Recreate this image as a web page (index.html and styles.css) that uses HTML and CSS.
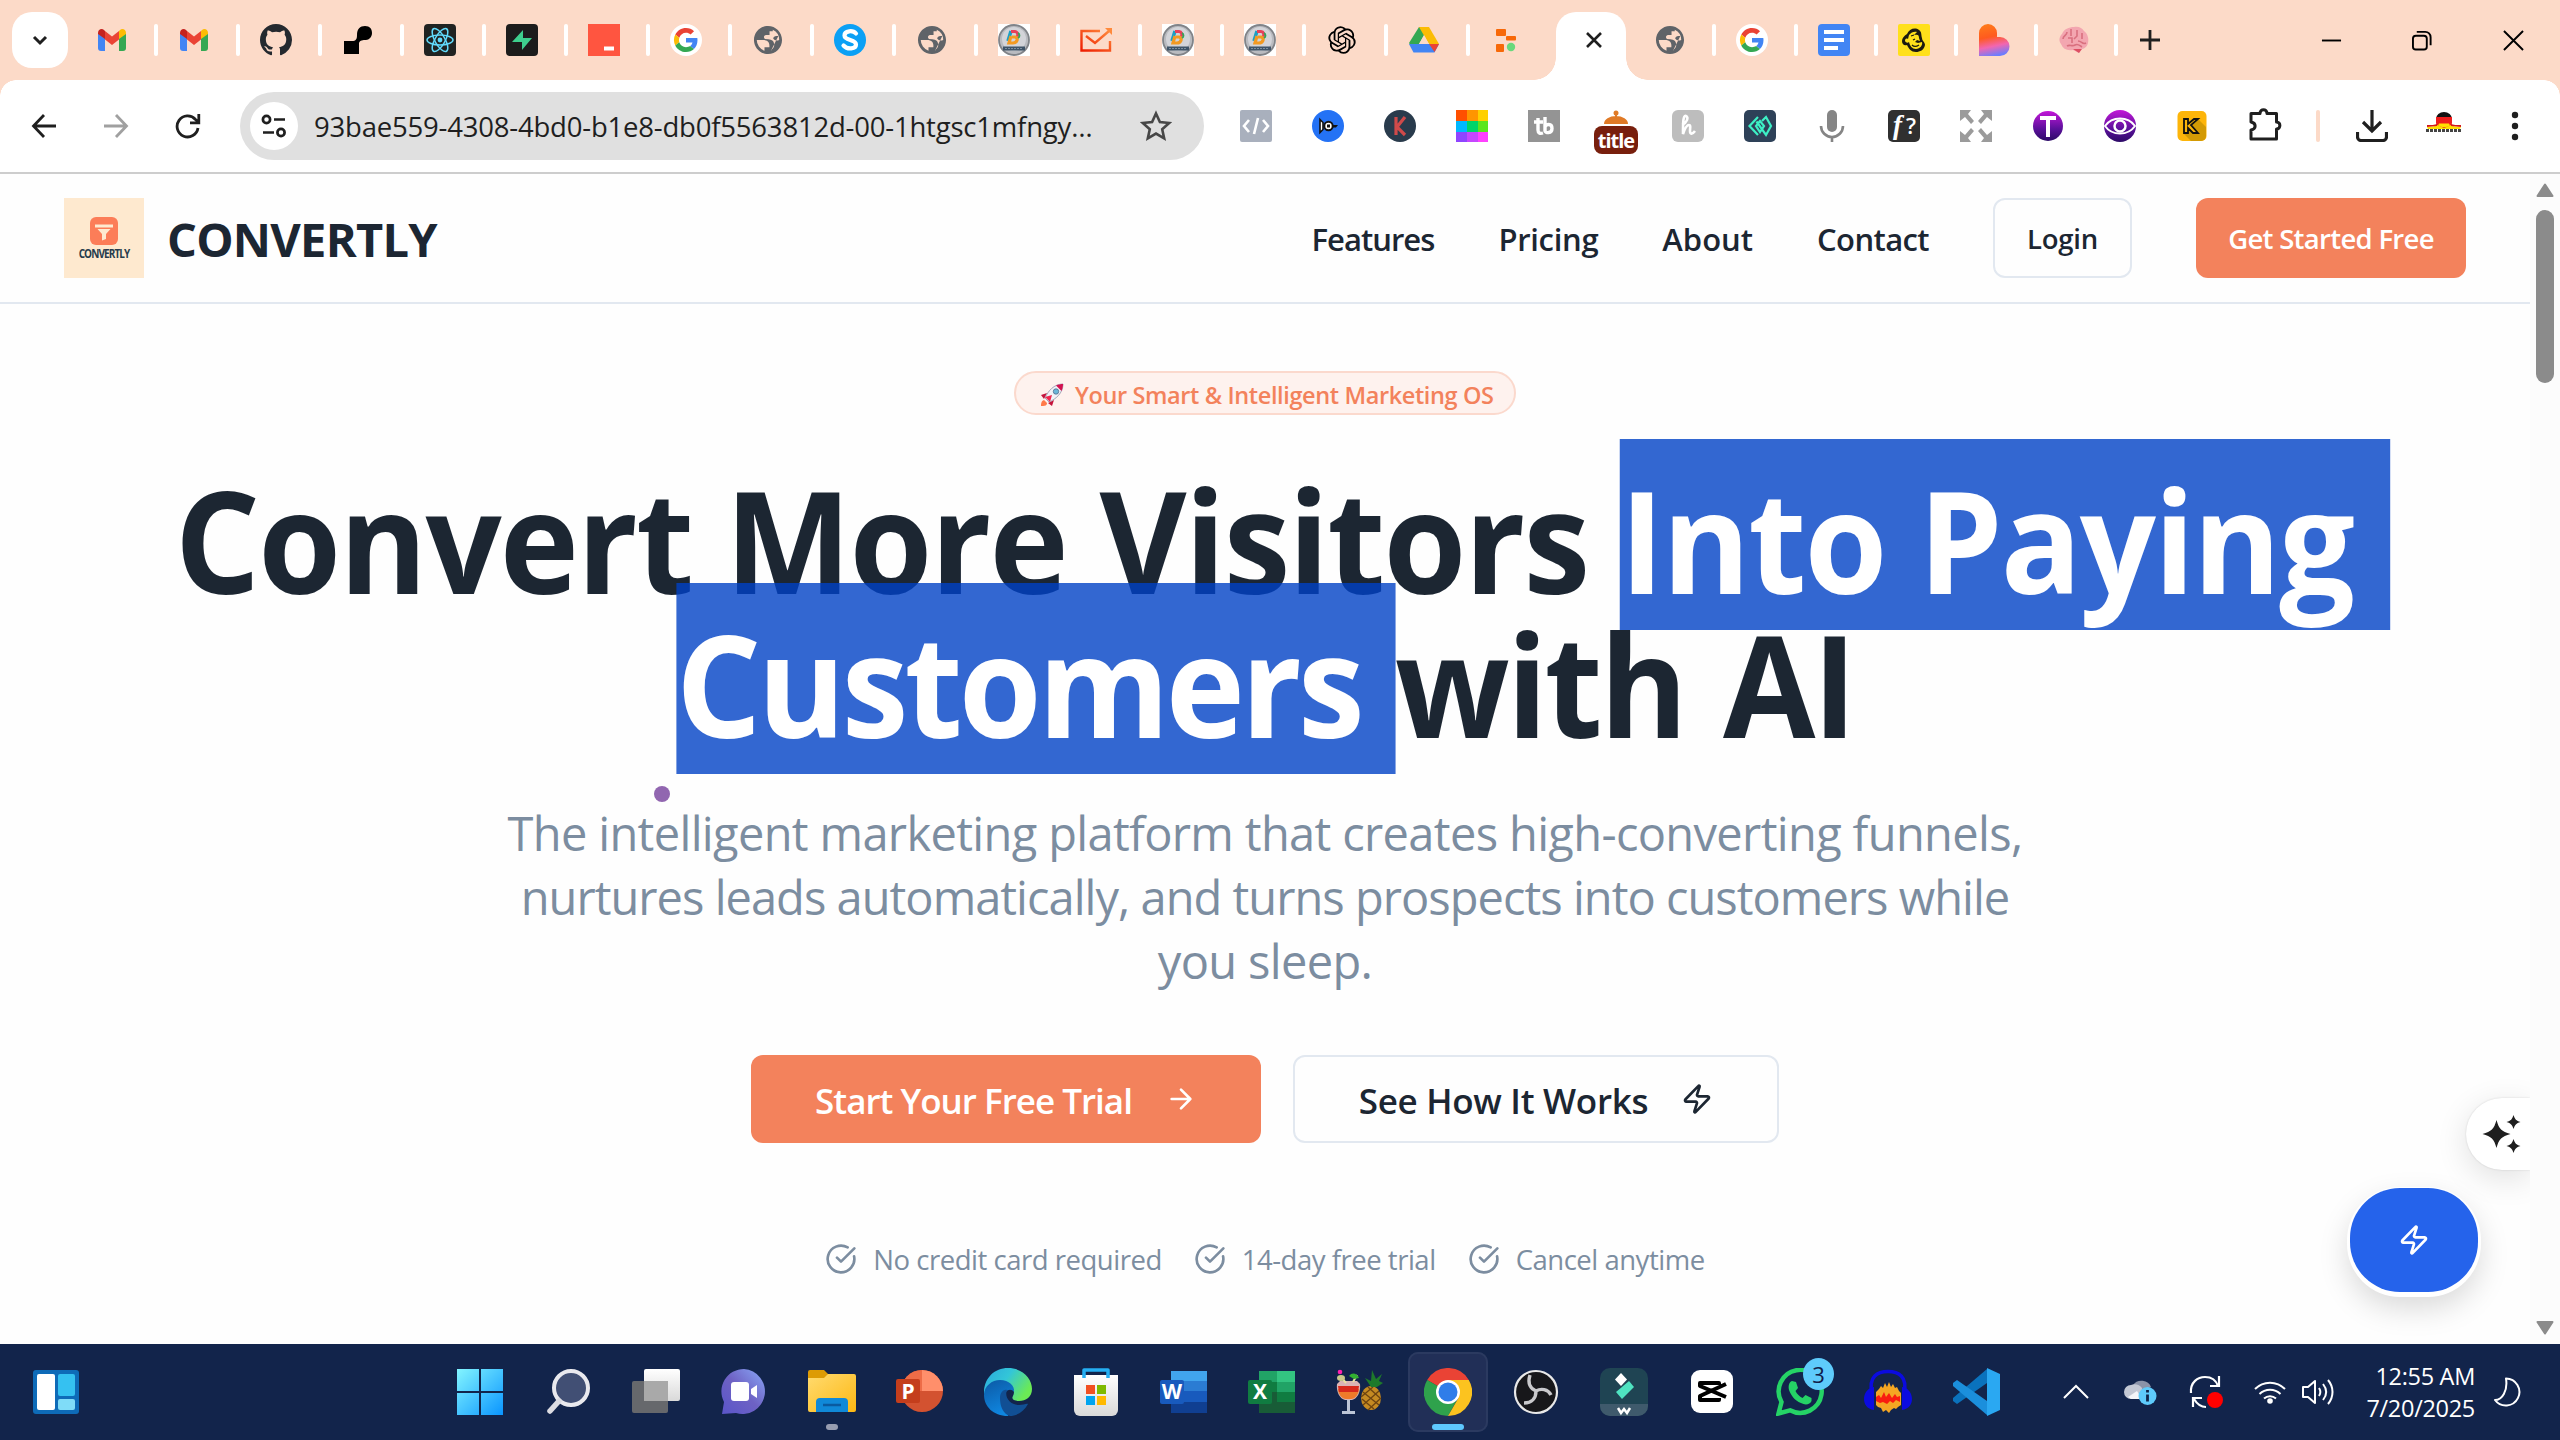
FILE: index.html
```html
<!DOCTYPE html>
<html lang="en">
<head>
<meta charset="utf-8">
<title>Convertly</title>
<link rel="stylesheet" href="styles.css">
</head>
<body>
<svg class="defs" width="0" height="0">
  <defs>
    <linearGradient id="gwin" x1="0" y1="0" x2="1" y2="1"><stop offset="0" stop-color="#83f5ff"/><stop offset="1" stop-color="#0a95ff"/></linearGradient>
    <linearGradient id="gwhite" x1="0" y1="0" x2="0" y2="1"><stop offset="0" stop-color="#fff"/><stop offset="1" stop-color="#d9d9d9"/></linearGradient>
    <linearGradient id="gteams" x1="0" y1="1" x2="1" y2="0"><stop offset="0" stop-color="#5a55c9"/><stop offset=".5" stop-color="#6e62c4"/><stop offset="1" stop-color="#8aa9f8"/></linearGradient>
    <linearGradient id="gfold" x1="0" y1="0" x2="1" y2="1"><stop offset="0" stop-color="#ffdb70"/><stop offset="1" stop-color="#fdb813"/></linearGradient>
    <linearGradient id="gedge" x1="0" y1="0" x2="1" y2="0.5"><stop offset="0" stop-color="#2aa8dd"/><stop offset=".5" stop-color="#33c6d8"/><stop offset="1" stop-color="#6bea55"/></linearGradient>
    <linearGradient id="gedge2" x1="0" y1="0" x2="0.4" y2="1"><stop offset="0" stop-color="#0c59a4"/><stop offset="1" stop-color="#0f86e0"/></linearGradient>
    <linearGradient id="glove" x1="0.3" y1="0" x2="0.5" y2="1"><stop offset="0" stop-color="#ff7a1a"/><stop offset=".4" stop-color="#ff5a1f"/><stop offset=".7" stop-color="#f266b0"/><stop offset="1" stop-color="#6a7dff"/></linearGradient>
    <linearGradient id="gpur" x1="0" y1="0" x2="0" y2="1"><stop offset="0" stop-color="#c317d8"/><stop offset=".6" stop-color="#5a109a"/><stop offset="1" stop-color="#2c0b66"/></linearGradient>
    <linearGradient id="gmailo" x1="0" y1="1" x2="1" y2="0"><stop offset="0" stop-color="#ee1c00"/><stop offset="1" stop-color="#ff8a3c"/></linearGradient>
  </defs>
  <symbol id="gmail" viewBox="0 0 32 32"><path d="M2 9v15a3 3 0 0 0 3 3h4V14z" fill="#4285f4"/><path d="M30 9v15a3 3 0 0 1-3 3h-4V14z" fill="#34a853"/><path d="M2 9c0-4 4-5 6-3l1 1v8L2 10z" fill="#c5221f"/><path d="M30 9c0-4-4-5-6-3l-1 1v8l7-5z" fill="#fbbc04"/><path d="M9 7l7 5.500 7-5.500v8.500l-7 5.500-7-5.500z" fill="#ea4335"/></symbol>
  <symbol id="github" viewBox="0 0 16 16"><path fill="#24292f" d="M8 0C3.580 0 0 3.580 0 8c0 3.540 2.290 6.530 5.470 7.590.4.070.55-.17.55-.38 0-.19-.01-.82-.01-1.490-2.010.37-2.530-.49-2.690-.94-.09-.23-.48-.94-.82-1.130-.28-.15-.68-.52-.01-.53.63-.01 1.080.58 1.230.82.72 1.210 1.870.87 2.330.66.07-.52.28-.87.51-1.070-1.780-.2-3.640-.89-3.640-3.950 0-.87.31-1.590.82-2.150-.08-.2-.36-1.020.08-2.120 0 0 .67-.21 2.200.82.64-.18 1.320-.27 2-.27s1.360.09 2 .27c1.530-1.040 2.200-.82 2.200-.82.44 1.100.16 1.920.08 2.120.51.56.82 1.270.82 2.150 0 3.070-1.870 3.750-3.650 3.950.29.25.54.73.54 1.480 0 1.070-.01 1.930-.01 2.200 0 .21.15.46.55.38A8.010 8.010 0 0 0 16 8c0-4.420-3.580-8-8-8z"/></symbol>
  <symbol id="globe" viewBox="0.6 0.6 22.8 22.8"><path fill="#5f6368" d="M12 2C6.480 2 2 6.480 2 12s4.480 10 10 10 10-4.480 10-10S17.520 2 12 2zM4 12h4.400c3.410.02 4.930 1.730 4.570 5.130H9.500v2.470A8 8 0 0 1 4 12zm10.130 7.720V19c1.500-.9 2.300-2 2.300-3.500 0-2.700-1.500-4-4.300-4.100L9.800 11.300c-1.100-1.300-.9-2.300.6-2.900h2.700V5.700h2.300V4.770A8 8 0 0 1 19.980 12c-1.800.7-3.400.4-4.300-1 .2-1.100 1-1.700 2.300-1.800h1.400z" fill-rule="evenodd"/></symbol>
  <symbol id="google" viewBox="0 0 32 32"><circle cx="16" cy="16" r="16" fill="#fff"/><g transform="translate(4 4) scale(.5)"><path fill="#ea4335" d="M24 9.500c3.540 0 6.710 1.220 9.210 3.600l6.850-6.850C35.900 2.380 30.470 0 24 0 14.620 0 6.510 5.380 2.560 13.220l7.980 6.190C12.430 13.720 17.740 9.500 24 9.500z"/><path fill="#4285f4" d="M46.980 24.550c0-1.570-.15-3.090-.38-4.550H24v9.020h12.940c-.58 2.960-2.260 5.480-4.780 7.180l7.730 6c4.510-4.180 7.090-10.360 7.090-17.650z"/><path fill="#fbbc05" d="M10.530 28.590a14.500 14.500 0 0 1 0-9.180l-7.980-6.190a24 24 0 0 0 0 21.560z"/><path fill="#34a853" d="M24 48c6.480 0 11.930-2.130 15.890-5.810l-7.730-6c-2.150 1.450-4.920 2.300-8.160 2.300-6.260 0-11.570-4.220-13.470-9.910l-7.980 6.190C6.510 42.620 14.620 48 24 48z"/></g></symbol>
  <symbol id="coin" viewBox="0 0 32 32"><path d="M0 0h32v32H0z" fill="#fff"/><circle cx="16" cy="16" r="15" fill="#b9bbc0" stroke="#808388" stroke-width="1.800"/><circle cx="16" cy="15" r="12" fill="#d3d4d9"/><path d="M13 7l-3 10" stroke="#1d9fc4" stroke-width="3.500" fill="none"/><path d="M13 7.500h4a3 3 0 0 1 2 5" stroke="#e8405a" stroke-width="3" fill="none"/><path d="M14 13h3c4 1 2 6-2 6h-4l2-7" stroke="#f39a22" stroke-width="3.200" fill="none"/><path d="M20 9c2 1 2 4 0 5" stroke="#35a35a" stroke-width="1.800" fill="none"/><path d="M5 22.500h22v4H5z" fill="#3f5468"/><path d="M7 24.500h18" stroke="#7d8fa0" stroke-width="1" stroke-dasharray="2 1"/></symbol>
  <symbol id="zap" viewBox="0 0 24 24"><path fill="none" stroke="currentColor" stroke-width="2" stroke-linecap="round" stroke-linejoin="round" d="M4 14a1 1 0 0 1-.78-1.630l9.900-10.200a.5.5 0 0 1 .86.460l-1.920 6.020A1 1 0 0 0 13 10h7a1 1 0 0 1 .78 1.630l-9.900 10.200a.5.5 0 0 1-.86-.46l1.920-6.020A1 1 0 0 0 11 14z"/></symbol>
  <symbol id="check" viewBox="0 0 24 24"><path fill="none" stroke="currentColor" stroke-width="2" stroke-linecap="round" stroke-linejoin="round" d="M21.801 10A10 10 0 1 1 17 3.335M9 11l3 3L22 4"/></symbol>
</svg>

<div class="screen">
  <header class="tabs">
    <button class="tab-search"><svg width="20" height="20" viewBox="0 0 20 20"><path d="M4 7l6 6 6-6" fill="none" stroke="#1f1f1f" stroke-width="3"/></svg></button>
    <div class="strip">
      <span class="tab"><svg><use href="#gmail"/></svg></span>
      <span class="tab"><svg><use href="#gmail"/></svg></span>
      <span class="tab"><svg><use href="#github"/></svg></span>
      <span class="tab"><svg viewBox="0 0 32 32"><path d="M2 30V17h8c4 0 5-2 5-6 0-6 3-9 8-9s7 3 7 7-3 7-6 7-6 0-7 3v11z" fill="#000"/></svg></span>
      <span class="tab"><svg viewBox="0 0 32 32"><rect width="32" height="32" rx="4" fill="#202322"/><g fill="none" stroke="#61dafb" stroke-width="1.500"><ellipse cx="16" cy="16" rx="13" ry="5"/><ellipse cx="16" cy="16" rx="13" ry="5" transform="rotate(60 16 16)"/><ellipse cx="16" cy="16" rx="13" ry="5" transform="rotate(120 16 16)"/></g><circle cx="16" cy="16" r="2.400" fill="#61dafb"/></svg></span>
      <span class="tab"><svg viewBox="0 0 32 32"><rect width="32" height="32" rx="4" fill="#1c1c1c"/><path d="M17 6v8h9L16 26v-8H6z" fill="#3ecf8e"/></svg></span>
      <span class="tab"><svg viewBox="0 0 32 32"><path d="M0 0h32v32H0z" fill="#ff5540"/><path d="M16 22.500h10v4H16z" fill="#fff"/></svg></span>
      <span class="tab"><svg><use href="#google"/></svg></span>
      <span class="tab"><svg><use href="#globe"/></svg></span>
      <span class="tab"><svg viewBox="0 0 32 32"><circle cx="16" cy="16" r="16" fill="#0ba0f5"/><path d="M22 9.500C19 6 10.500 6.500 10.500 11.500c0 5.500 11.500 3.500 11.500 9 0 4.500-8.500 5.500-12.500 1" fill="none" stroke="#fff" stroke-width="4.200" stroke-linecap="round"/></svg></span>
      <span class="tab"><svg><use href="#globe"/></svg></span>
      <span class="tab"><svg><use href="#coin"/></svg></span>
      <span class="tab"><svg viewBox="0 0 32 32"><g fill="none" stroke="url(#gmailo)" stroke-width="2.400"><path d="M20 7H1.500v19.500H30V17M6 12l9 7 14-12"/></g><path d="M25 4h7v7z" fill="#ff8a3c"/></svg></span>
      <span class="tab"><svg><use href="#coin"/></svg></span>
      <span class="tab"><svg><use href="#coin"/></svg></span>
      <span class="tab"><svg viewBox="-2 -2 28 28"><path d="M22.282 9.821a5.985 5.985 0 0 0-.516-4.910 6.046 6.046 0 0 0-6.510-2.900A6.065 6.065 0 0 0 4.981 4.182a5.985 5.985 0 0 0-3.998 2.900 6.046 6.046 0 0 0 .743 7.097 5.980 5.980 0 0 0 .511 4.911 6.051 6.051 0 0 0 6.515 2.900A5.985 5.985 0 0 0 13.260 24a6.056 6.056 0 0 0 5.772-4.206 5.989 5.989 0 0 0 3.998-2.900 6.056 6.056 0 0 0-.748-7.073zm-9.022 12.608a4.476 4.476 0 0 1-2.876-1.041l.142-.08 4.778-2.758a.795.795 0 0 0 .393-.681v-6.737l2.020 1.169a.071.071 0 0 1 .038.052v5.583a4.504 4.504 0 0 1-4.495 4.494zm-9.661-4.125a4.471 4.471 0 0 1-.535-3.014l.142.085 4.783 2.758a.771.771 0 0 0 .781 0l5.843-3.369v2.332a.08.08 0 0 1-.033.062L9.740 19.950a4.499 4.499 0 0 1-6.141-1.646zM2.341 7.896a4.485 4.485 0 0 1 2.366-1.973V11.600a.766.766 0 0 0 .388.677l5.814 3.354-2.020 1.169a.076.076 0 0 1-.071 0l-4.830-2.787A4.504 4.504 0 0 1 2.341 7.872zm16.596 3.856L13.104 8.364 15.119 7.200a.076.076 0 0 1 .071 0l4.830 2.791a4.494 4.494 0 0 1-.677 8.104v-5.677a.79.79 0 0 0-.407-.667zm2.011-3.023l-.142-.085-4.774-2.782a.776.776 0 0 0-.785 0L9.409 9.230V6.897a.066.066 0 0 1 .028-.062l4.830-2.787a4.499 4.499 0 0 1 6.680 4.660zM8.307 12.863l-2.020-1.164a.08.08 0 0 1-.038-.057V6.074a4.499 4.499 0 0 1 7.376-3.454l-.142.081L8.704 5.459a.795.795 0 0 0-.393.681zm1.098-2.365l2.602-1.500 2.607 1.500v2.999l-2.597 1.500-2.607-1.500z" fill="#000"/></svg></span>
      <span class="tab"><svg viewBox="0 0 32 32"><path d="M11 3h10l-10 17-4 8-6-9z" fill="#34a853"/><path d="M11 3h10l10 17H21z" fill="#fbbc04"/><path d="M1 20h30l-4.500 8.500H5.500z" fill="#4285f4"/><path d="M21 20h10l-4.500 8z" fill="#ea4335"/><path d="M11 20h10l-5-9z" fill="#fcdac8"/></svg></span>
      <span class="tab last"><svg viewBox="0 0 32 32"><rect x="6" y="5" width="10" height="7" rx="1" fill="#f76808"/><rect x="16" y="12" width="10" height="4.500" rx="1" fill="#f76808"/><rect x="6" y="20" width="8" height="8" rx="1" fill="#f76808"/><circle cx="21" cy="23" r="4.200" fill="#68d97c"/></svg></span>
    </div>
    <div class="active"><svg width="20" height="20" viewBox="0 0 20 20"><path d="M3 3l14 14M17 3L3 17" stroke="#1f1f1f" stroke-width="2.600"/></svg></div>
    <div class="strip after">
      <span class="tab"><svg><use href="#globe"/></svg></span>
      <span class="tab"><svg><use href="#google"/></svg></span>
      <span class="tab n"><svg viewBox="0 0 32 32"><rect width="32" height="32" rx="4" fill="#4285f4"/><path d="M6 6h20v4H6zM6 14h20v4H6zM6 22h14v4H6z" fill="#fff"/></svg></span>
      <span class="tab n"><svg viewBox="0 0 32 32"><rect width="32" height="32" rx="2" fill="#ffe01b"/><path d="M9 10c2-5 8-7 12-4 3 2 2 5 3 8 0 3 3 4 3 7-1 5-5 7-9 7-5 0-7-3-9-7-3 1-5-1-5-4 0-3 2-5 5-7z" fill="#1c1a10"/><path d="M11 11c2-3 6-4 8-3l-3 3c4-1 5 0 5 3l1 3-3-1-2 2 3 1 4-1c1 3-2 7-6 7-4 0-6-3-7-7-1 1-3 1-4-1 0-2 1-3 3-2z" fill="#ffe01b"/><path d="M13 12l3-1M15 16l2-1M14 21c2 2 4 2 7 0" stroke="#1c1a10" stroke-width="1.300" fill="none"/></svg></span>
      <span class="tab n"><svg viewBox="0 0 32 32"><path d="M1 32V9a9 9 0 0 1 18 0v4h3a9.500 9.500 0 0 1 0 19z" fill="url(#glove)"/></svg></span>
      <span class="tab n"><svg viewBox="0 0 32 32"><path d="M16 3c5-1 8 1 10 4 4 3 5 8 4 12-1 4-4 6-7 6l-2 4-6-3c-6 1-10-1-12-6-3-4-1-8 1-10 2-5 7-7 12-7z" fill="#f3a6b0"/><path d="M9 8c0 4-4 3-4 7M13 5v7M10 14h4v5M19 6v6l-3 3M24 9v6M20 17c4 0 4 4 8 2M9 22c3-2 5 1 8-1s5 1 7 2" fill="none" stroke="#d9707f" stroke-width="1.600"/><path d="M15 25l6 4 3-4z" fill="#dd4f63"/></svg></span>
    </div>
    <button class="new-tab"><svg width="22" height="22" viewBox="0 0 22 22"><path d="M11 1v20M1 11h20" stroke="#1f1f1f" stroke-width="2.800"/></svg></button>
    <div class="win-btns">
      <svg viewBox="0 0 22 22"><path d="M1 11h20" stroke="#000" stroke-width="2"/></svg>
      <svg viewBox="0 0 22 22"><rect x="1" y="6" width="14.500" height="14.500" rx="3" fill="none" stroke="#000" stroke-width="2"/><path d="M5 2h9a5.500 5.500 0 0 1 5.500 5.500V16" fill="none" stroke="#000" stroke-width="2"/></svg>
      <svg viewBox="0 0 22 22"><path d="M1 1l20 20M21 1L1 21" stroke="#000" stroke-width="2"/></svg>
    </div>
  </header>

  <div class="toolbar">
    <div class="nav-btns">
      <svg width="26" height="26" viewBox="0 0 26 26"><path d="M25 13H3M13 2L2.500 13 13 24" fill="none" stroke="#1f1f1f" stroke-width="2.800"/></svg>
      <svg width="26" height="26" viewBox="0 0 26 26"><path d="M1 13h22M13 2l10.500 11L13 24" fill="none" stroke="#a0a0a0" stroke-width="2.800"/></svg>
      <svg width="26" height="26" viewBox="0 0 26 26"><path d="M23 15a10.500 10.500 0 1 1-2.500-8.500L23.500 9M23.800 1v8.800H15" fill="none" stroke="#1f1f1f" stroke-width="2.800"/></svg>
    </div>
    <div class="address">
      <span class="site"><svg width="26" height="26" viewBox="0 0 26 26"><g fill="none" stroke="#1f1f1f" stroke-width="2.700"><circle cx="5.500" cy="6.500" r="3.600"/><path d="M13 6.500h11M2 19.500h11"/><circle cx="20" cy="19.500" r="3.600"/></g></svg></span>
      <span class="url">93bae559-4308-4bd0-b1e8-db0f5563812d-00-1htgsc1mfngy…</span>
      <svg class="star" width="32" height="32" viewBox="0 0 32 32"><path d="M16 3.500l3.900 8.600 9.300.9-7 6.200 2 9.200L16 23.600l-8.200 4.800 2-9.200-7-6.200 9.300-.9z" fill="none" stroke="#474747" stroke-width="2.600"/></svg>
    </div>
    <div class="exts">
      <svg viewBox="0 0 32 32"><rect width="32" height="32" rx="2" fill="#a9b0bd"/><path d="M9 10l-5 6 5 6M23 10l5 6-5 6M18 8l-4 16" fill="none" stroke="#fff" stroke-width="2.600"/></svg>
      <svg viewBox="0 0 32 32"><circle cx="16" cy="16" r="16" fill="#2472f5"/><path d="M8 9.500l3 3v7l-3 3z" fill="#fff" stroke="#111" stroke-width="1.600"/><circle cx="16.500" cy="16" r="4.200" fill="#fff" stroke="#111" stroke-width="2"/><path d="M15 14.500h3v3h-3z" fill="#111"/><path d="M21 15h5l-2 2.500h-3z" fill="#111"/></svg>
      <svg viewBox="0 0 32 32"><circle cx="16" cy="16" r="16" fill="#293b4c"/><path d="M12 7v18M21 7l-8 10 8 8" fill="none" stroke="#cf4a4a" stroke-width="3.200"/></svg>
      <svg viewBox="0 0 32 32"><path d="M0 0h11v11H0z" fill="#ff5000"/><path d="M11 0h11v11H11z" fill="#ff9500"/><path d="M22 0h10v11H22z" fill="#ffd000"/><path d="M0 11h11v11H0z" fill="#00b8ff"/><path d="M11 11h11v11H11z" fill="#00d46a"/><path d="M22 11h10v11H22z" fill="#5ae61e"/><path d="M0 22h11v10H0z" fill="#8f45ff"/><path d="M11 22h11v10H11z" fill="#c646ff"/><path d="M22 22h10v10H22z" fill="#ff41ff"/></svg>
      <svg viewBox="0 0 32 32"><path d="M0 0h32v32H0z" fill="#949494"/><path d="M10 8v12c0 3 2 4 5 3M6 12h9M17 7v14c0 2 7 3 7-2.500S18 14 17 17" fill="none" stroke="#fff" stroke-width="3.400"/></svg>
      <div class="title-ext"><svg width="44" height="16" viewBox="0 0 44 16"><circle cx="22" cy="3" r="2.500" fill="#e07a26"/><path d="M21 4h2v3h-2zM10 14a12 8 0 0 1 24 0z" fill="#e07a26"/></svg><b>title</b></div>
      <svg viewBox="0 0 32 32"><rect width="32" height="32" rx="6" fill="#bdbdbd"/><path d="M10 15c5-2 7-8 4-9s-3 7-3 18c2-6 4-9 6-9s1 3 1 6 2 4 5 0" fill="none" stroke="#fff" stroke-width="2.600"/></svg>
      <svg viewBox="0 0 32 32"><rect width="32" height="32" rx="5" fill="#2e4158"/><path d="M14 7L5.500 16l8.500 9M12.500 11.500L22 25l5-9-5-9-4 4M16 11l-4 5 4 6 4-6z" fill="none" stroke="#3df0c5" stroke-width="2.200"/></svg>
      <svg viewBox="0 0 32 32"><rect x="11" y="0" width="10" height="22" rx="5" fill="#858585"/><path d="M5 16a11 11 0 0 0 22 0M16 27v5" fill="none" stroke="#858585" stroke-width="2.600"/></svg>
      <svg viewBox="0 0 32 32"><rect width="32" height="32" rx="5" fill="#303030"/><text x="5" y="24" font-family="Liberation Serif, serif" font-style="italic" font-weight="700" font-size="27" fill="#fff">f</text><text x="18" y="24" font-family="Open Sans, sans-serif" font-weight="600" font-size="22" fill="#fff">?</text></svg>
      <svg viewBox="0 0 32 32"><path d="M0 0h11L8 4l6 7-3 3-6-7-5 4zM32 0H21l3 4-6 7 3 3 6-7 5 4zM0 32h11l-3-4 6-7-3-3-6 7-5-4zM32 32H21l3-4-6-7 3-3 6 7 5-4z" fill="#9b9b9b"/></svg>
      <svg viewBox="0 0 32 32"><circle cx="16" cy="16" r="15" fill="url(#gpur)"/><path d="M8 8h16M16 8v19" stroke="#fff" stroke-width="4" fill="none"/></svg>
      <svg viewBox="0 0 32 32"><circle cx="16" cy="16" r="16" fill="url(#gpur)"/><path d="M1 16c7-10 23-10 30 0-7 10-23 10-30 0z" fill="none" stroke="#fff" stroke-width="2"/><circle cx="16" cy="16" r="5.500" fill="none" stroke="#fff" stroke-width="2.500"/></svg>
      <svg viewBox="0 0 32 32"><rect x="1.500" y="1" width="29" height="30" rx="5" fill="#fdb50a"/><path d="M22 9l8 8v9a5 5 0 0 1-5 5H15L8 24z" fill="#d39a05"/><path d="M8 9h4v5l6-5h4l-7 6 7 8h-5l-5-5v5H8z" fill="#fdb50a" stroke="#111" stroke-width="1.800"/></svg>
      <svg class="puzzle" viewBox="0 0 34 34"><path d="M3 5.500h9c0-5 7-5 7 0h9.500V14c4.500 0 4.500 7 0 7v10H3v-9c5.500-1 5.500-7 0-8z" fill="none" stroke="#1f1f1f" stroke-width="3" stroke-linejoin="round"/></svg>
    </div>
    <span class="tsep"></span>
    <div class="right">
      <svg viewBox="0 0 32 32"><path d="M16 0v21M7 12l9 9 9-9M1.500 22v5a3.500 3.500 0 0 0 3.500 3.500h22a3.500 3.500 0 0 0 3.500-3.500v-5" fill="none" stroke="#1f1f1f" stroke-width="3.200"/></svg>
      <svg class="avatar" width="38" height="32" viewBox="0 0 38 32"><path d="M11 9a8 7 0 0 1 16 0z" fill="#111"/><path d="M11 7h16v6a8 6 0 0 1-16 0z" fill="#ee1c1c"/><path d="M13 15.500a8 5 0 0 0 12 0l-1-2H14z" fill="#ffdf00"/><path d="M2 17c5 0 8-1 10-2l7 3 7-3c2 1 5 2 10 2l-1 2H3z" fill="#ffdf00"/><path d="M2 15c4 0 8 0 10-1v2l-10 1zM36 15c-4 0-8 0-10-1v2l10 1z" fill="#d31818"/><path d="M1 20.500h36" stroke="#444" stroke-width="3" stroke-dasharray="3 1"/></svg>
      <svg viewBox="0 0 32 32"><g fill="#1f1f1f"><circle cx="15" cy="5" r="3.200"/><circle cx="15" cy="16" r="3.200"/><circle cx="15" cy="27" r="3.200"/></g></svg>
    </div>
  </div>

  <div class="viewport">
    <main class="page">
      <nav class="site-nav">
        <div class="brand">
          <div class="logo"><svg width="28" height="28" viewBox="0 0 28 28"><rect width="28" height="28" rx="6" fill="#fc7d58"/><path d="M5 7.500h18v3H5zM7.500 12h13l-4.500 5v5l-4 1.500V17z" fill="#feead0"/></svg><span>CONVERTLY</span></div>
          <span class="name">CONVERTLY</span>
        </div>
        <div class="links">
          <a>Features</a><a>Pricing</a><a>About</a><a>Contact</a>
          <button class="login">Login</button>
          <button class="cta">Get Started Free</button>
        </div>
      </nav>
      <section class="hero">
        <div class="badge">
          <svg width="24" height="24" viewBox="0 0 24 24"><path d="M7 10l-6 2 3 4zM14 17l-2 6-4-3z" fill="#c4143c"/><path d="M5 15C8 8 14 1 23 1c0 9-7 15-14 18z" fill="#f2f2f7" stroke="#8c8fa8" stroke-width=".8"/><path d="M16 2.500C18 1.500 21 1 23 1c0 2-.5 5-1.500 7z" fill="#d31250"/><circle cx="16" cy="8.500" r="2.700" fill="#6bb7d9" stroke="#50698c" stroke-width=".8"/><path d="M5 14l5 5 2-7z" fill="#f0284f"/><path d="M4 17c-3 1-3 4-3 6 3 0 6 0 6-3z" fill="#ff7a4a"/></svg>
          <span>Your Smart &amp; Intelligent Marketing OS</span>
        </div>
        <h1>
          <span class="row first"><span class="plain">Convert More Visitors</span><span class="sel">Into Paying</span></span>
          <span class="row second"><span class="sel">Customers</span><span class="plain">with AI</span></span>
        </h1>
        <p class="lead"><span>The intelligent marketing platform that creates high-converting funnels,</span><span>nurtures leads automatically, and turns prospects into customers while</span><span>you sleep.</span></p>
        <div class="actions">
          <button class="primary"><span>Start Your Free Trial</span><svg width="32" height="32" viewBox="0 0 24 24"><path d="M5 12h14M12 5l7 7-7 7" fill="none" stroke="currentColor" stroke-width="2" stroke-linecap="round" stroke-linejoin="round"/></svg></button>
          <button class="secondary"><span>See How It Works</span><svg width="32" height="32"><use href="#zap"/></svg></button>
        </div>
        <ul class="perks">
          <li><svg width="32" height="32"><use href="#check"/></svg><span>No credit card required</span></li>
          <li><svg width="32" height="32"><use href="#check"/></svg><span>14-day free trial</span></li>
          <li><svg width="32" height="32"><use href="#check"/></svg><span>Cancel anytime</span></li>
        </ul>
      </section>
      <i class="dot"></i>
      <div class="assist"><svg width="40" height="40" viewBox="0 0 40 40"><g fill="#1f1f1f"><path d="M14.500 5c2.500 9 5 11.500 14 14-9 2.500-11.500 5-14 14-2.500-9-5-11.500-14-14 9-2.500 11.500-5 14-14zM31.500 0c1.500 4.500 2.500 5.500 7 7-4.500 1.500-5.500 2.500-7 7-1.500-4.500-2.500-5.500-7-7 4.500-1.500 5.500-2.500 7-7zM31.500 24c1.500 4.500 2.500 5.500 7 7-4.500 1.500-5.500 2.500-7 7-1.500-4.500-2.500-5.500-7-7 4.500-1.500 5.500-2.500 7-7z"/></g></svg></div>
      <button class="fab"><svg width="32" height="32"><use href="#zap"/></svg></button>
    </main>
    <div class="scrollbar">
      <svg width="18" height="15" viewBox="0 0 18 15"><path d="M9 1.500L16.500 13h-15z" fill="#8b8b8b" stroke="#8b8b8b" stroke-width="2" stroke-linejoin="round"/></svg>
      <i></i>
      <svg class="down" width="18" height="15" viewBox="0 0 18 15"><path d="M9 13.500L1.500 2h15z" fill="#8b8b8b" stroke="#8b8b8b" stroke-width="2" stroke-linejoin="round"/></svg>
    </div>
  </div>

  <footer class="taskbar">
    <span class="widgets"><svg width="48" height="48" viewBox="0 0 48 48"><rect x="1" y="2" width="46" height="44" rx="3" fill="#0e6bb8"/><rect x="5" y="6" width="18" height="36" rx="2" fill="#fff"/><rect x="26" y="6" width="17" height="22" rx="2" fill="#35c1f1"/><rect x="26" y="31" width="17" height="11" rx="2" fill="#7fdcf8"/></svg></span>
    <div class="apps">
      <span><svg viewBox="0 0 48 48"><path d="M1 1h22v22H1zM25 1h22v22H25zM1 25h22v22H1zM25 25h22v22H25z" fill="url(#gwin)"/></svg></span>
      <span><svg viewBox="0 0 48 48"><circle cx="27" cy="20" r="17" fill="#414f74" stroke="#e9e9ee" stroke-width="4"/><path d="M15 33L6 43" stroke="#dcdce2" stroke-width="5.500" stroke-linecap="round"/></svg></span>
      <span><svg viewBox="0 0 48 48"><rect x="12" y="1" width="36" height="32" rx="2" fill="url(#gwhite)"/><rect x="0" y="13" width="36" height="32" rx="2" fill="#707070" fill-opacity=".9"/><path d="M12 13h24v20H12z" fill="#a9a9a9"/></svg></span>
      <span><svg viewBox="0 0 48 48"><path d="M24 1a22.500 22.500 0 1 1-8 44L2 46l2-12A22.500 22.500 0 0 1 24 1z" fill="url(#gteams)"/><rect x="11" y="14" width="18" height="19" rx="3" fill="#fff"/><path d="M31 21l6-4v13l-6-4z" fill="#fff"/></svg></span>
      <span class="run"><svg viewBox="0 0 48 48"><path d="M0 4a2 2 0 0 1 2-2h14l5 5v4H0z" fill="#dd9b04"/><path d="M0 10h16l4-4h26a2 2 0 0 1 2 2v34a2 2 0 0 1-2 2H2a2 2 0 0 1-2-2z" fill="url(#gfold)"/><path d="M8 44V34a4 4 0 0 1 4-4h24a4 4 0 0 1 4 4v10z" fill="#1089d8"/><path d="M15 37h18" stroke="#0a5ba0" stroke-width="2.500"/></svg></span>
      <span><svg viewBox="0 0 48 48"><circle cx="26" cy="23" r="21" fill="#d35230"/><path d="M26 2a21 21 0 0 1 21 21H26z" fill="#ff8f6b"/><path d="M26 2v21H5A21 21 0 0 1 26 2z" fill="#ed6c47"/><rect x="0" y="11" width="24" height="24" rx="2" fill="#c43e1c"/><text x="12" y="30.500" text-anchor="middle" class="office">P</text></svg></span>
      <span><svg viewBox="0 0 48 48"><path d="M0 27C-1 12 9 0 24 0s24 11 24 21c0 8-6 12-13 12-5 0-8-2-6-5 3-6-1-12-9-12-9 0-18 4-20 11z" fill="url(#gedge)"/><path d="M0 27c0-9 8-15 16-15 9 0 15 6 14 12-2-3-6-3-8 0-3 4-2 12 5 17l-3 7C9 48 0 38 0 27z" fill="url(#gedge2)"/><path d="M16 30c0-6 4-9 7-8-3 7 3 15 12 15 4 0 8-2 9-1-4 8-12 12-18 12-7-2-10-10-10-18z" fill="#114f94"/></svg></span>
      <span><svg viewBox="0 0 48 48"><path d="M2 7h44v35a6 6 0 0 1-6 6H8a6 6 0 0 1-6-6z" fill="url(#gwhite)"/><path d="M12 10V2h24v8" fill="none" stroke="#25aff3" stroke-width="3.500" stroke-linejoin="round"/><path d="M14 17h9v9h-9z" fill="#f25022"/><path d="M25 17h9v9h-9z" fill="#7fba00"/><path d="M14 28h9v9h-9z" fill="#00a4ef"/><path d="M25 28h9v9h-9z" fill="#ffb900"/></svg></span>
      <span><svg viewBox="0 0 48 48"><path d="M11 3h36v11H11z" fill="#41a5ee"/><path d="M11 13h36v11H11z" fill="#2b7cd3"/><path d="M11 23h36v11H11z" fill="#185abd"/><path d="M11 34h36v11H11z" fill="#103f91"/><rect y="12" width="24" height="24" rx="2" fill="#185abd"/><text x="12" y="31" text-anchor="middle" class="office">W</text></svg></span>
      <span><svg viewBox="0 0 48 48"><path d="M11 3h18v11H11z" fill="#21a366"/><path d="M29 3h18v11H29z" fill="#33c481"/><path d="M11 14h18v10H11z" fill="#107c41"/><path d="M29 14h18v10H29z" fill="#21a366"/><path d="M11 24h36v21H11z" fill="#185c37"/><path d="M29 24h18v10H29z" fill="#107c41"/><rect y="12" width="24" height="24" rx="2" fill="#107c41"/><text x="12" y="31" text-anchor="middle" class="office">X</text></svg></span>
      <span><svg viewBox="0 0 48 48"><ellipse cx="35" cy="30" rx="10" ry="12" fill="#c58a22"/><path d="M27 24l16 13M26 31l12 10M32 19l12 11M43 23L27 37M37 19L25 29M45 30L32 42" stroke="#6d4310" stroke-width="1.300"/><path d="M35 19L29 10l6 3 1-11 4 9 6-5-3 7 4 2-6 4z" fill="#1e7a2b"/><path d="M1 16l3-3h17l3 3c1 8-3 15-8 16h-7C4 31 0 24 1 16z" fill="#d9b3b4"/><path d="M2 21h21c0 5-4 10-8 10h-5c-4 0-8-5-8-10z" fill="#ef7a2a"/><path d="M2 18h21l-1 6H3z" fill="#d8281c"/><path d="M12.500 32v12M6 44.500h13" stroke="#bcc5d6" stroke-width="3"/><path d="M10 15L5 9M17 14l4-7" stroke="#e8e0a0" stroke-width="2"/><path d="M13 8c3-4 8-3 10 2l-5 1z" fill="#31b031"/><ellipse cx="5" cy="10" rx="4" ry="3" fill="#c9c98a"/><circle cx="4" cy="4" r="2.300" fill="#ff20b0"/></svg></span>
      <span class="run on"><svg viewBox="0 0 48 48"><path d="M24 24L3.200 12A24 24 0 0 1 44.800 12z" fill="#ea4335"/><path d="M24 24L3.200 12A24 24 0 0 0 24 48l10-18z" fill="#2fa24c"/><path d="M24 12h20.800A24 24 0 0 1 24 48l10.400-18z" fill="#fcc31f"/><circle cx="24" cy="24" r="12" fill="#fff"/><circle cx="24" cy="24" r="9.500" fill="#2f7de9"/></svg></span>
      <span><svg viewBox="0 0 48 48"><circle cx="24" cy="24" r="21" fill="#17171a" stroke="#e8e8e8" stroke-width="2.200"/><g fill="none" stroke="#c9c9cc" stroke-width="3.400"><path d="M24 23c-5-2-9-7-6-16M24 23c5-3 12-2 15 4M24 23c0 7-4 12-12 12"/></g></svg></span>
      <span><svg viewBox="0 0 48 48"><rect width="48" height="48" rx="10" fill="#1f4453"/><path d="M0 36h48v2a10 10 0 0 1-10 10H10A10 10 0 0 1 0 38z" fill="#3f5a6c"/><path d="M21 5l6 6.500-6 6.500-6-6.500z" fill="#fff"/><path d="M29 13l5 6-12 12-6-7z" fill="#4fe3c1"/><path d="M18 40l3 5 3-4 3 4 3-5" fill="none" stroke="#fff" stroke-width="2.500"/></svg></span>
      <span><svg viewBox="0 0 48 48"><rect x="3" y="2" width="42" height="43" rx="9" fill="#fff"/><path d="M31 17v-2H12v3l26 11M38 16L12 28v4h19v-2" fill="none" stroke="#000" stroke-width="4" stroke-linejoin="round"/></svg></span>
      <span class="wa"><svg viewBox="0 0 48 48"><path d="M2.500 45.500l3-11.500A21.500 21.500 0 1 1 14 42.300z" fill="none" stroke="#25d366" stroke-width="4.500"/><path d="M16 13l4 1 2 6-2.500 3c1.500 3 4 5.500 7 7l3-3 6 3v3c-1 3-5 4-8 3-7-2-12-7-14.500-14-1-4 0-8 3-9z" fill="#25d366"/></svg><b>3</b></span>
      <span><svg viewBox="0 0 48 48"><path d="M8 26C4 8 14 3.500 24 3.500s20 4.500 16 22.500" fill="none" stroke="#0b0be0" stroke-width="3.500"/><path d="M10 19v23C3 41 0 36 0 31s3-11 10-12zM38 19v23c7-1 10-6 10-11s-3-11-10-12z" fill="#0b0be0"/><path d="M12 24l3-3 2-3 2 2 2-5 2 4 2-5 2 5 2-3 2 4 2-1 2 4 2 2v12l-3 2-2 2-2-1-3 2-2 3-3-3-3 2-2-4-3-1-2-2z" fill="#f5a623"/><path d="M12 29l3-2 2 3 3-6 2 5 3-4 3 5 3-4 2 3 3-1v6l-4-2-3 3-3-2-3 3-4-2-3 1-4-2z" fill="#f91d10"/></svg></span>
      <span><svg viewBox="0 0 48 48"><path d="M35 1v14L5 36l-4-3v-3z" fill="#0a72bd"/><path d="M35 47V33L5 12l-4 3v3z" fill="#1b8fdc"/><path d="M35 0l13 6v36l-13 6z" fill="#2aa8f2"/></svg></span>
    </div>
    <div class="tray">
      <svg class="chev" width="28" height="16" viewBox="0 0 28 16"><path d="M2 14L14 2l12 12" fill="none" stroke="#fff" stroke-width="2"/></svg>
      <svg class="cloud" width="34" height="30" viewBox="0 0 34 30"><path d="M9 8a10 9 0 0 1 18 2l-8 4z" fill="#8b93a8"/><path d="M7 22a7 7 0 0 1 0-14c4-2 9 0 11 3v11z" fill="#c3c8d4"/><path d="M4 20l9-6 5 8H7z" fill="#f4f5f8"/><circle cx="23.500" cy="19" r="9" fill="#5ecbfb"/><path d="M23.500 17.500v7M23.500 13v2.500" stroke="#10254a" stroke-width="2.800"/></svg>
      <svg class="sync" width="34" height="34" viewBox="0 0 34 34"><path d="M2 18C1 7 9 2 16 2c6 0 11 3 13 9M30 1v10h-9M17 32c-6 0-9-3-12-8M4 32V23h9" fill="none" stroke="#fff" stroke-width="2.200"/><circle cx="26" cy="25" r="8" fill="#f00"/></svg>
      <svg class="wifi" width="34" height="24" viewBox="0 0 34 24"><g fill="none" stroke="#fff" stroke-width="2"><path d="M2 9a21 21 0 0 1 30 0M6.500 14a15 15 0 0 1 21 0M11 18.500a9 9 0 0 1 12 0"/></g><circle cx="17" cy="21" r="2.800" fill="#fff"/></svg>
      <svg class="vol" width="34" height="28" viewBox="0 0 34 28"><path d="M2 9h5l7-6v22l-7-6H2zM18 10c2 3 2 5 0 8M22 6c4 5 4 11 0 16M27 2c6 7 6 17 0 24" fill="none" stroke="#fff" stroke-width="2" stroke-linejoin="round"/></svg>
      <div class="clock"><span>12:55 AM</span><span>7/20/2025</span></div>
      <svg class="moon" width="28" height="30" viewBox="0 0 28 30"><path d="M13 1.500a13.500 13.500 0 1 1-11 21.500c7 0 13-9 11-21.500z" fill="none" stroke="#fff" stroke-width="2" stroke-linejoin="round"/></svg>
    </div>
  </footer>
</div>
</body>
</html>
```
FILE: styles.css
```css
* { box-sizing: border-box; }
body { margin: 0; font-family: "Open Sans", "Noto Sans", sans-serif; color: #1c2632; background: #fff; }
button { border: 0; padding: 0; background: none; font: inherit; color: inherit; display: flex; align-items: center; justify-content: center; }
svg { display: block; flex: none; }
.defs { position: absolute; }
.screen { width: 2560px; height: 1440px; display: flex; flex-direction: column; overflow: hidden; }

/* Browser tab strip */
.tabs { height: 80px; flex: none; background: #fcdac8; display: flex; align-items: center; }
.tab-search { width: 56px; height: 56px; margin: 0 8px 0 12px; border-radius: 20px; background: #fff; }
.strip { display: flex; }
.tab { width: 82px; height: 32px; padding-left: 20px; display: flex; justify-content: space-between; }
.tab svg { width: 32px; height: 32px; }
.tab::after { content: ""; width: 4px; height: 32px; border-radius: 2px; background: #fff; }
.tab.last::after { visibility: hidden; }
.tab.n { width: 80px; padding-left: 20px; }
.after { margin-left: 8px; }
.active { width: 70px; height: 68px; margin-left: 4px; align-self: flex-end; border-radius: 20px 20px 0 0; background: #fff; display: flex; align-items: center; justify-content: center; padding: 0 0 12px 6px; position: relative; }
.active::before, .active::after { content: ""; position: absolute; bottom: 0; width: 22px; height: 22px; }
.active::before { right: 100%; background: radial-gradient(circle at 0 0, transparent 21.500px, #fff 22px); }
.active::after { left: 100%; background: radial-gradient(circle at 100% 0, transparent 21.500px, #fff 22px); }
.new-tab { margin-left: 21px; }
.win-btns { margin-left: auto; margin-right: 36px; display: flex; gap: 70px; }
.win-btns svg { width: 21px; height: 21px; }

/* Toolbar */
.toolbar { height: 94px; flex: none; border-bottom: 2px solid #cdcdcd; background: radial-gradient(circle at 16px 16px, #fff 15.500px, #fcdac8 16px) 0 0 / 16px 16px no-repeat, radial-gradient(circle at 0 16px, #fff 15.500px, #fcdac8 16px) 100% 0 / 16px 16px no-repeat, #fff; display: flex; align-items: center; }
.nav-btns { display: flex; gap: 46px; padding-left: 31px; }
.address { width: 964px; height: 68px; margin-left: 39px; border-radius: 34px; background: #e0e0e0; display: flex; align-items: center; padding: 0 32px 0 10px; }
.site { width: 48px; height: 48px; border-radius: 50%; background: #fff; display: flex; align-items: center; justify-content: center; }
.url { margin-left: 16px; font-size: 27.500px; letter-spacing: -.2px; color: #1f1f1f; white-space: nowrap; }
.star { margin-left: auto; }
.exts { display: flex; gap: 40px; margin-left: 36px; }
.exts > svg, .right svg { width: 32px; height: 32px; }
.exts > .puzzle { width: 34px; height: 34px; margin-top: -2px; }
.title-ext { width: 32px; height: 32px; display: flex; flex-direction: column; align-items: center; }
.title-ext b { width: 44px; height: 28px; flex: none; border-radius: 8px; background: #781f0d; color: #fff; font-size: 20px; line-height: 29px; text-align: center; letter-spacing: -1px; }
.tsep { width: 4px; height: 32px; border-radius: 2px; background: #fcdac8; margin-left: 34px; }
.right { display: flex; gap: 37px; margin-left: 36px; align-items: center; }
.right svg.avatar { width: 38px; }

/* Page */
.viewport { height: 1170px; flex: none; display: flex; }
.page { width: 2530px; position: relative; overflow: hidden; background: #fefefe; }
.scrollbar { width: 30px; background: #fcfcfc; display: flex; flex-direction: column; align-items: center; padding: 9px 0; }
.scrollbar i { width: 18px; height: 173px; margin-top: 12px; border-radius: 9px; background: #8b8b8b; }
.scrollbar .down { margin-top: auto; }
.site-nav { height: 130px; border-bottom: 2px solid #e2e8f0; padding: 0 64px; display: flex; align-items: center; justify-content: space-between; }
.brand { display: flex; align-items: center; gap: 23px; }
.logo { width: 80px; height: 80px; background: #fee9cf; display: flex; flex-direction: column; align-items: center; padding-top: 19px; }
.logo span { font: 700 10px/16px "Open Sans", sans-serif; letter-spacing: -.9px; color: #263b4c; transform: scaleY(1.2); }
.name { font-size: 47px; font-weight: 700; letter-spacing: -.75px; padding-top: 2px; }
.links { display: flex; align-items: center; gap: 64px; }
.links a { font-size: 31px; font-weight: 600; padding-top: 1px; }
.links a:nth-child(1) { letter-spacing: -.96px; }
.links a:nth-child(2) { letter-spacing: -.29px; }
.links a:nth-child(4) { letter-spacing: -.6px; }
.login, .cta { height: 80px; border-radius: 12px; font-size: 27.500px; font-weight: 600; }
.login { width: 139px; border: 2px solid #e2e8f0; letter-spacing: -.2px; }
.cta { width: 270px; background: #f3825c; color: #fff; letter-spacing: -.7px; padding-top: 1px; }

.hero { display: flex; flex-direction: column; align-items: center; padding-top: 67px; }
.badge { width: 502px; height: 44px; border: 2px solid #fbd9cd; border-radius: 22px; background: #fef2ee; color: #f3825c; font-size: 23.500px; font-weight: 600; letter-spacing: -.38px; display: flex; align-items: center; gap: 11px; padding: 3px 0 0 24px; white-space: nowrap; }
h1 { align-self: flex-start; width: 2660px; margin: 47px 0 1px; font-size: 141px; font-weight: 700; letter-spacing: -2px; transform: scaleX(.95); transform-origin: 0 0; }
.row { height: 144px; display: flex; align-items: center; white-space: nowrap; }
.row > span { height: 191px; line-height: 201px; }
.first { padding-left: 184px; }
.first .plain { width: 1521px; }
.first .sel { width: 811px; }
.second { padding-left: 711.500px; }
.second .sel { width: 757px; letter-spacing: -4px; }
.second .plain { letter-spacing: -3.200px; word-spacing: 7px; }
.sel { position: relative; background: rgba(0, 65, 197, .8); color: #fff; }
.lead { margin: 50px 0 0; font-size: 47px; line-height: 64px; letter-spacing: -.65px; color: #7c8da0; text-align: center; }
.lead span { display: block; }
.lead span:nth-child(2) { letter-spacing: -.97px; }
.actions { display: flex; gap: 32px; margin-top: 62px; }
.actions button { height: 88px; border-radius: 12px; font-size: 35px; font-weight: 600; gap: 33px; white-space: nowrap; }
.actions span { padding-top: 3px; }
.primary { width: 510px; background: #f3825c; color: #fff; letter-spacing: -1px; }
.secondary { width: 486px; border: 2px solid #e2e8f0; letter-spacing: -.3px; }
.perks { list-style: none; margin: 96px 0 0; padding: 0; display: flex; gap: 32px; height: 40px; color: #7c8da0; font-size: 27.500px; letter-spacing: -.48px; }
.perks li { display: flex; align-items: center; gap: 16px; }
.perks span { padding-top: 1px; }
.dot { position: absolute; left: 654px; top: 612px; width: 16px; height: 16px; border-radius: 50%; background: #9166b0; }
.assist { position: absolute; right: 0; top: 924px; width: 64px; height: 72px; border-radius: 36px 0 0 36px; background: #fff; box-shadow: 0 8px 32px rgba(0, 0, 0, .12), 0 0 2px rgba(0, 0, 0, .15); padding: 17px 0 0 16px; }
.fab { position: absolute; left: 2350px; top: 1014px; width: 128px; height: 104px; border-radius: 50px; background: #2563eb; color: #fff; box-shadow: 0 2px 0 3px #fff, 0 14px 30px 2px rgba(0, 0, 0, .15); }

/* Windows taskbar */
.taskbar { height: 96px; flex: none; background: #12244b; display: flex; align-items: center; }
.widgets { margin-left: 32px; }
.apps { display: flex; gap: 8px; margin-left: 360px; }
.apps > span { width: 80px; height: 80px; border-radius: 10px; display: flex; align-items: center; justify-content: center; position: relative; }
.apps svg { width: 48px; height: 48px; }
.office { font: 700 21px "Open Sans", sans-serif; fill: #fff; }
.run::after { content: ""; position: absolute; bottom: 2px; width: 12px; height: 6px; border-radius: 3px; background: #979db0; }
.on { background: #212f57; box-shadow: inset 0 0 0 2px #2b3a60; }
.on::after { width: 32px; background: #5ec8fe; }
.wa b { position: absolute; right: 6px; top: 6px; width: 31px; height: 32px; border-radius: 50%; background: #5ecbfb; color: #10204a; font: 400 22px/32px "Open Sans", sans-serif; text-align: center; }
.tray { margin-left: auto; display: flex; align-items: center; padding-right: 39px; }
.cloud { margin-left: 34px; }
.sync { margin-left: 31px; }
.wifi { margin-left: 30px; }
.vol { margin-left: 14px; }
.clock { width: 120px; margin: -1px 0 0 20px; color: #fff; font-size: 23.500px; line-height: 32px; text-align: right; letter-spacing: -.3px; }
.clock span { display: block; }
.moon { margin-left: 18px; }
```
